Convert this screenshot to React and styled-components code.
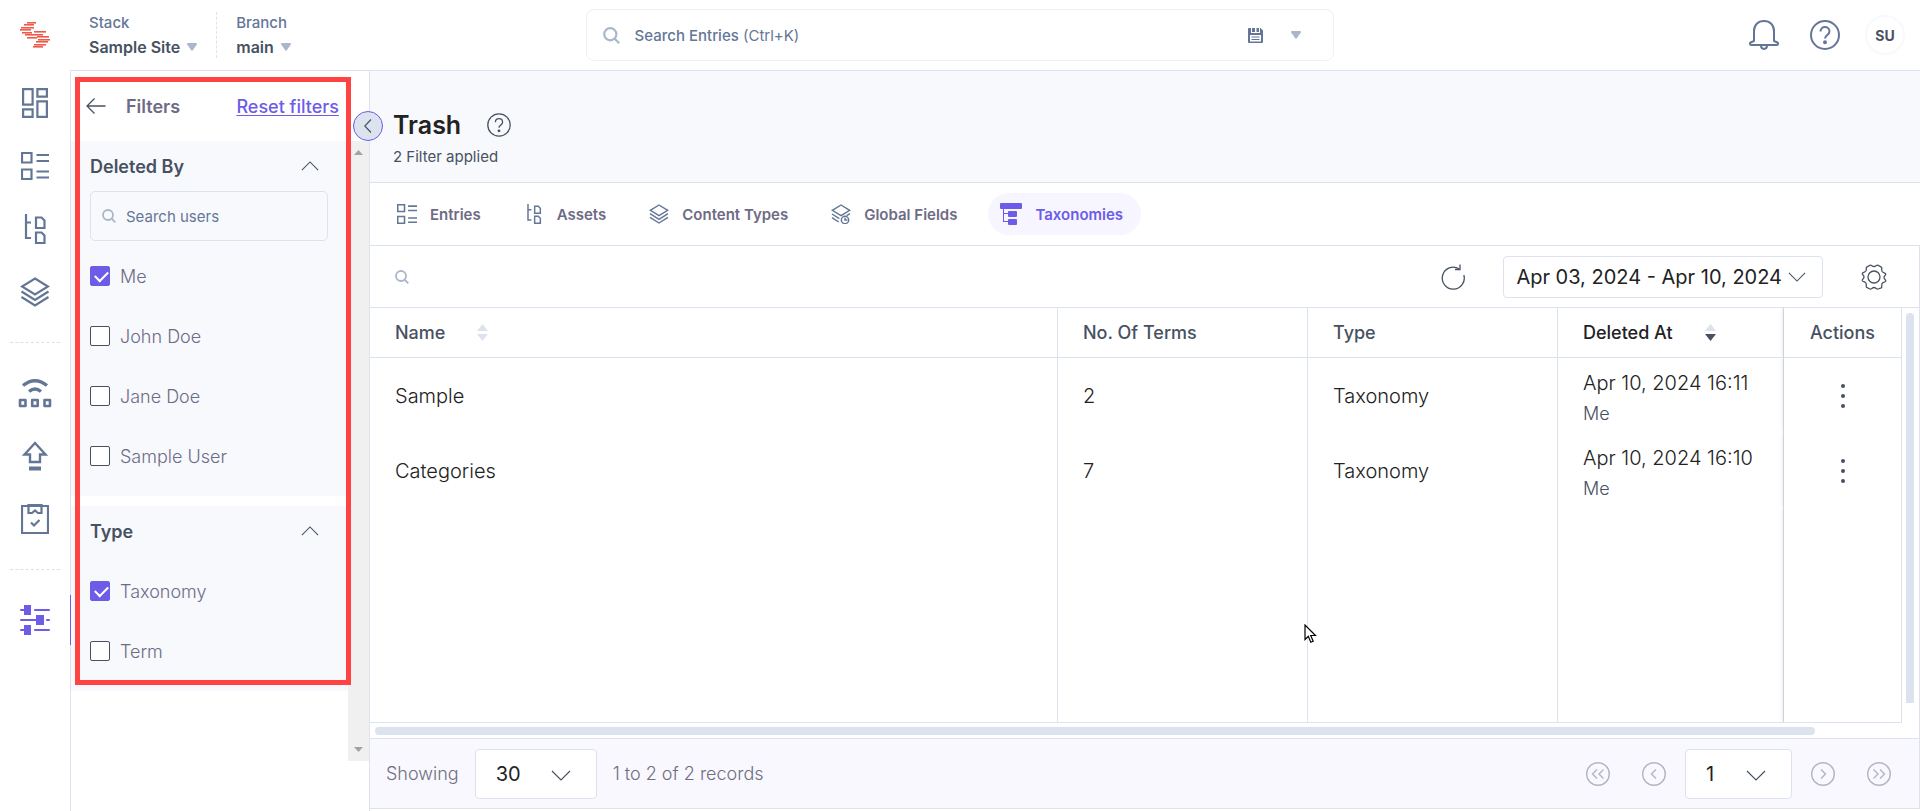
import React, { useState } from 'react';
import styled, { createGlobalStyle } from 'styled-components';

const TABS = [
    { id: 'entries', label: 'Entries' },
    { id: 'assets', label: 'Assets' },
    { id: 'content', label: 'Content Types' },
    { id: 'global', label: 'Global Fields' },
    { id: 'taxonomies', label: 'Taxonomies' },
];

const ROWS = [
    { id: 1, name: 'Sample', terms: 2, type: 'Taxonomy', date: 'Apr 10, 2024 16:11', by: 'Me' },
    { id: 2, name: 'Categories', terms: 7, type: 'Taxonomy', date: 'Apr 10, 2024 16:10', by: 'Me' },
];

function Logo() {
    const bars = [
        [7, 0, 9], [4, 2, 10], [1, 5, 13], [0, 7, 11], [2, 10, 10], [5, 12, 18],
        [14, 9, 12], [7, 15, 10], [17, 14, 12], [18, 17, 12], [16, 19, 12], [14, 22, 12], [13, 24, 10],
    ];
    return (
        <svg width="30" height="26" viewBox="0 0 30 26" fill="#ee5a4a" aria-hidden="true">
            {bars.map(([x, y, w]) => (
                <rect key={`${x}-${y}`} x={x} y={y} width={w} height="1.6" />
            ))}
        </svg>
    );
}

function EntriesIcon({ size = 28 }) {
    return (
        <svg width={size} height={size} viewBox="0 0 28 28" fill="none" stroke="currentColor" strokeWidth="2.2" aria-hidden="true">
            <path d="M1 1h9.500v9.500H1zM1 17.500h9.500V27H1zM15.500 3H28M15.500 9H28M15.500 19.500H28M15.500 25.500H28" />
        </svg>
    );
}

function AssetsIcon({ size = 30 }) {
    return (
        <svg width={size} height={size} viewBox="0 0 30 30" fill="none" stroke="currentColor" strokeWidth="2.2" aria-hidden="true">
            <path d="M6 0v24h5M6 8.500h5M16 3.500h5.500l3 3V14H16zM16 18.500h5.500l3 3V29H16z" />
        </svg>
    );
}

function LayersIcon({ size = 30, clock }) {
    return (
        <svg width={size} height={size} viewBox="0 0 30 30" fill="none" stroke="currentColor" strokeWidth="2.2" aria-hidden="true">
            <path d="M15 1.500L28 9.500 15 17.500 2 9.500z" />
            {clock ? (
                <>
                    <path d="M1.500 15l11 7M28.500 14.500l-5 3M1.500 20.500l10 6.500" />
                    <circle cx="21" cy="24" r="5.500" />
                    <path d="M21 20.500V24h3.500" />
                </>
            ) : (
                <path d="M1.500 14.500L15 23l13.500-8.500M1.500 20L15 28.500 28.500 20" />
            )}
        </svg>
    );
}

function TaxonomyIcon() {
    return (
        <svg width="22" height="22" viewBox="0 0 22 22" fill="currentColor" aria-hidden="true">
            <rect width="22" height="6" rx="1" />
            <path d="M3 5h1v5h5v1H4v7h5v1H3z" />
            <rect x="8" y="8" width="9" height="6" rx="1" />
            <rect x="8" y="16" width="9" height="6" rx="1" />
        </svg>
    );
}

function DashboardIcon() {
    return (
        <svg width="26" height="30" viewBox="0 0 26 30" fill="none" stroke="currentColor" strokeWidth="2.200" aria-hidden="true">
            <path d="M1.100 1.100h9.500v15.500H1.100zM15.400 1.100h9.500v7.500h-9.500zM1.100 21.400h9.500v7.500H1.100zM15.400 13.400h9.500v15.500h-9.500z" />
        </svg>
    );
}

function ReleaseIcon() {
    return (
        <svg width="34" height="30" viewBox="0 0 34 30" fill="none" stroke="currentColor" aria-hidden="true">
            <path d="M5 7.500Q17-2 29 7.500" strokeWidth="3.4" />
            <path d="M11 13.500q6-5 12 0" strokeWidth="3.4" />
            <path d="M2 22h5.500v6H2zM14.200 22h5.500v6h-5.500zM26.500 22H32v6h-5.500z" strokeWidth="2.600" strokeLinejoin="round" />
        </svg>
    );
}

function PublishIcon() {
    return (
        <svg width="28" height="30" viewBox="0 0 28 30" fill="none" stroke="currentColor" strokeWidth="2.400" aria-hidden="true">
            <path d="M14 2L3.500 13.500h5.500V21h10v-7.500h5.500z" />
            <path d="M8 27.500h12" strokeWidth="4" />
        </svg>
    );
}

function TasksIcon() {
    return (
        <svg width="28" height="30" viewBox="0 0 28 30" fill="none" stroke="currentColor" strokeWidth="2.2" aria-hidden="true">
            <path d="M1 2h26v27H1zM7.500 1h13v8h-3.500L14 6.500 11 9H7.500zM10 18.500l3 3 5.500-5.500" />
        </svg>
    );
}

function SlidersIcon() {
    return (
        <svg width="30" height="30" viewBox="0 0 30 30" fill="currentColor" aria-hidden="true">
            <path d="M4 0h7v10H4zM16 10h8v10h-8zM4 20h7v10H4z" />
            <path d="M1 5h4M15 5h14M1 15h17M27 15h2M1 25h4M15 25h14" stroke="currentColor" strokeWidth="2" strokeLinecap="round" />
        </svg>
    );
}

function SearchIcon({ size = 14 }) {
    return (
        <svg width={size} height={size} viewBox="0 0 14 14" fill="none" stroke="#a9b6cb" strokeWidth="1.800" aria-hidden="true">
            <circle cx="6" cy="6" r="5" />
            <path d="M9.500 9.500L13.300 13.300" />
        </svg>
    );
}

function Chevron({ dir = 'down', width = 20 }) {
    const d = {
        down: 'M1 1l9 9 9-9',
        up: 'M1 10l9-9 9 9',
    };
    return (
        <svg width={width} height={Math.round(width * 0.55)} viewBox="0 0 20 11" fill="none" stroke="#475161" strokeWidth="1.200" aria-hidden="true">
            <path d={d[dir]} />
        </svg>
    );
}

function Caret() {
    return (
        <svg width="10" height="8" viewBox="0 0 10 8" fill="#a9b6cb" aria-hidden="true">
            <path d="M1 0h8a1 1 0 0 1 .8 1.600L5.800 7.300a1 1 0 0 1-1.600 0L.2 1.600A1 1 0 0 1 1 0z" />
        </svg>
    );
}

function HelpIcon({ size, stroke }) {
    return (
        <svg width={size} height={size} viewBox="0 0 30 30" fill="none" stroke="currentColor" strokeWidth={stroke} aria-hidden="true">
            <circle cx="15" cy="15" r="14" />
            <path d="M10.500 11.500c0-6 9-6 9 0 0 3.500-4.500 3.500-4.500 7" />
            <circle cx="15" cy="22.300" r="1" fill="currentColor" />
        </svg>
    );
}

function BellIcon() {
    return (
        <svg width="30" height="30" viewBox="0 0 30 30" fill="none" stroke="currentColor" strokeWidth="2" strokeLinejoin="round" aria-hidden="true">
            <path d="M5 21V11C5 5 9 1 15 1s10 4 10 10v10l3.500 1.500c1 .800.500 2.500-1 2.500h-25c-1.500 0-2-1.700-1-2.500z" />
            <path d="M12 25.500c0 4.500 6 4.500 6 0" />
        </svg>
    );
}

function SaveIcon() {
    return (
        <svg width="15" height="15" viewBox="0 0 15 15" fill="#647696" aria-hidden="true">
            <path fillRule="evenodd" d="M1 0h2v5h9V0h.500L15 2.500V14a1 1 0 0 1-1 1H1a1 1 0 0 1-1-1V1a1 1 0 0 1 1-1zM2 7v6.500h11V7z" />
            <path d="M4 0h3v4H4zM8.500 0h2.500v4H8.500zM3.500 8.500h8v1h-8zM3.500 11h8v1h-8z" />
        </svg>
    );
}

function RefreshIcon() {
    return (
        <svg width="24" height="26" viewBox="0 0 24 26" fill="none" stroke="#475161" strokeWidth="1.300" aria-hidden="true">
            <path d="M22.800 11A11 11 0 1 1 18 4.800" />
            <path d="M19 .500v5h-5" />
        </svg>
    );
}

function GearIcon() {
    return (
        <svg width="26" height="26" viewBox="0 0 26 26" fill="none" stroke="#475161" strokeWidth="1.300" strokeLinejoin="round" aria-hidden="true">
            <path d="M9 1.200C10.500.600 11 2.500 13 2.500s2.500-1.900 4-1.300l3.300 1.900c1.200.900-.200 2.300.700 4.200 1 1.800 2.900 1.300 3.700 2.500.500 1.700-1.700 1.700-1.700 3.700s2.200 2.200 1.700 3.700c-.8 1.400-2.700.600-3.700 2.500-.900 1.700.500 3.200-.700 4.200L17 25c-1.500.500-2-1.500-4-1.500S10.500 25.500 9 25l-3.300-1.600c-1.200-1 .2-2.500-.7-4.200-1-1.900-2.900-1.100-3.700-2.500-.5-1.500 1.700-1.700 1.700-3.700S.800 11 1.300 9.300C2.100 8.100 4 8.600 5 6.800c.9-1.900-.5-2.800.7-3.700z" />
            <circle cx="13" cy="13" r="6" />
        </svg>
    );
}

function PageArrow({ double, next }) {
    return (
        <svg width="24" height="24" viewBox="0 0 24 24" fill="none" stroke="#b1b5c3" strokeWidth="1.400" transform={next ? 'rotate(180)' : undefined} aria-hidden="true">
            <circle cx="12" cy="12" r="11.300" />
            {double ? <path d="M11 7.500L6.500 12l4.500 4.500M17.500 7.500L13 12l4.500 4.500" /> : <path d="M14 7.500L9.500 12l4.500 4.500" />}
        </svg>
    );
}

function SortIcon({ active }) {
    return (
        <svg width="11" height="17" viewBox="0 0 11 17" fill="#dce2ee" aria-hidden="true">
            <path d="M5.500 0L11 7H0z" />
            <path d="M5.500 17L0 10h11z" fill={active ? '#475161' : '#dce2ee'} />
        </svg>
    );
}

const TAB_ICONS = {
    entries: <EntriesIcon size={20} />,
    assets: <AssetsIcon size={20} />,
    content: <LayersIcon size={20} />,
    global: <LayersIcon size={20} clock />,
    taxonomies: <TaxonomyIcon />,
};

function FilterGroup({ title, items, children }) {
    const [checked, setChecked] = useState([items[0]]);
    const toggle = (item) => {
        setChecked(checked.includes(item) ? checked.filter((i) => i !== item) : [...checked, item]);
    };
    return (
        <Group>
            <GroupHead type="button">
                {title}
                <Chevron dir="up" width={18} />
            </GroupHead>
            {children}
            <Options>
                {items.map((item) => (
                    <Option key={item}>
                        <Checkbox type="checkbox" checked={checked.includes(item)} onChange={() => toggle(item)} />
                        {item}
                    </Option>
                ))}
            </Options>
        </Group>
    );
}

function App() {
    const [tab, setTab] = useState('taxonomies');
    return (
        <Page>
            <GlobalStyle />
            <TopBar>
                <TopLeft>
                    <LogoLink href="#" aria-label="Home"><Logo /></LogoLink>
                    <Switcher type="button">
                        <SwitcherLabel>Stack</SwitcherLabel>
                        <SwitcherValue>Sample Site <Caret /></SwitcherValue>
                    </Switcher>
                    <Switcher type="button" $divided>
                        <SwitcherLabel>Branch</SwitcherLabel>
                        <SwitcherValue>main <Caret /></SwitcherValue>
                    </Switcher>
                </TopLeft>
                <GlobalSearch>
                    <SearchIcon size={17} />
                    <SearchText type="button"><b>Search Entries</b> (Ctrl+K)</SearchText>
                    <SearchTools>
                        <IconButton type="button" aria-label="Saved searches"><SaveIcon /></IconButton>
                        <IconButton type="button" aria-label="Search options"><Caret /></IconButton>
                    </SearchTools>
                </GlobalSearch>
                <TopRight>
                    <TopActions>
                        <IconButton type="button" aria-label="Notifications"><BellIcon /></IconButton>
                        <IconButton type="button" aria-label="Help"><HelpIcon size={30} stroke={2} /></IconButton>
                    </TopActions>
                    <Avatar type="button">SU</Avatar>
                </TopRight>
            </TopBar>
            <Body>
                <Rail>
                    <RailLink href="#" aria-label="Dashboard"><DashboardIcon /></RailLink>
                    <RailLink href="#" aria-label="Entries"><EntriesIcon /></RailLink>
                    <RailLink href="#" aria-label="Assets"><AssetsIcon /></RailLink>
                    <RailLink href="#" aria-label="Content Models"><LayersIcon /></RailLink>
                    <RailDivider />
                    <RailLink href="#" aria-label="Releases"><ReleaseIcon /></RailLink>
                    <RailLink href="#" aria-label="Publish Queue"><PublishIcon /></RailLink>
                    <RailLink href="#" aria-label="Tasks"><TasksIcon /></RailLink>
                    <RailDivider />
                    <RailLink href="#" aria-label="Settings" $active><SlidersIcon /></RailLink>
                </Rail>
                <FilterPanel>
                    <PanelHead>
                        <IconButton type="button" aria-label="Back">
                            <svg width="20" height="16" viewBox="0 0 20 16" fill="none" stroke="#475161" strokeWidth="1.300">
                                <path d="M19.500 8H1M8.500.500L1 8l7.500 7.500" />
                            </svg>
                        </IconButton>
                        <PanelTitle>Filters</PanelTitle>
                        <ResetLink href="#">Reset filters</ResetLink>
                    </PanelHead>
                    <PanelBody>
                        <Groups>
                            <FilterGroup title="Deleted By" items={['Me', 'John Doe', 'Jane Doe', 'Sample User']}>
                                <UserSearch>
                                    <SearchIcon />
                                    <SearchInput type="text" placeholder="Search users" aria-label="Search users" />
                                </UserSearch>
                            </FilterGroup>
                            <FilterGroup title="Type" items={['Taxonomy', 'Term']} />
                        </Groups>
                        <PanelScroll>
                            <svg width="9" height="5" viewBox="0 0 9 5" fill="#a3a3a3"><path d="M4.500 0L9 5H0z" /></svg>
                            <svg width="9" height="5" viewBox="0 0 9 5" fill="#a3a3a3"><path d="M4.500 5L0 0h9z" /></svg>
                        </PanelScroll>
                    </PanelBody>
                    <Highlight />
                    <Collapse type="button" aria-label="Collapse filters">
                        <svg width="8" height="14" viewBox="0 0 8 14" fill="none" stroke="#475161" strokeWidth="1.200">
                            <path d="M7 .500L.800 7 7 13.500" />
                        </svg>
                    </Collapse>
                </FilterPanel>
                <Main>
                    <PageHead>
                        <TitleRow>
                            <Title>Trash</Title>
                            <HelpIcon size={24} stroke={1.6} />
                        </TitleRow>
                        <Subtitle>2 Filter applied</Subtitle>
                    </PageHead>
                    <Tabs>
                        {TABS.map((t) => (
                            <Tab key={t.id} type="button" $active={tab === t.id} onClick={() => setTab(t.id)}>
                                {TAB_ICONS[t.id]}
                                {t.label}
                            </Tab>
                        ))}
                    </Tabs>
                    <Content>
                        <Toolbar>
                            <TableSearch>
                                <SearchIcon />
                                <SearchInput type="text" aria-label="Search trash" />
                            </TableSearch>
                            <IconButton type="button" aria-label="Refresh"><RefreshIcon /></IconButton>
                            <DateRange type="button">
                                Apr 03, 2024 - Apr 10, 2024
                                <Chevron width={18} />
                            </DateRange>
                            <IconButton type="button" aria-label="Table settings"><GearIcon /></IconButton>
                        </Toolbar>
                        <TableArea>
                            <Table>
                                <colgroup>
                                    <col />
                                    <Col $width={250} />
                                    <Col $width={250} />
                                    <Col $width={226} />
                                    <Col $width={118} />
                                </colgroup>
                                <thead>
                                    <tr>
                                        <Th><Sortable>Name <SortIcon /></Sortable></Th>
                                        <Th>No. Of Terms</Th>
                                        <Th>Type</Th>
                                        <Th $active><Sortable>Deleted At <SortIcon active /></Sortable></Th>
                                        <Th $center>Actions</Th>
                                    </tr>
                                </thead>
                                <tbody>
                                    {ROWS.map((row) => (
                                        <Row key={row.id}>
                                            <Td>{row.name}</Td>
                                            <Td>{row.terms}</Td>
                                            <Td>{row.type}</Td>
                                            <Td $stacked>{row.date}<By>{row.by}</By></Td>
                                            <Td $center>
                                                <IconButton type="button" aria-label={`Actions for ${row.name}`}>
                                                    <svg width="4" height="24" viewBox="0 0 4 24" fill="#475161">
                                                        <circle cx="2" cy="2" r="2" />
                                                        <circle cx="2" cy="12" r="2" />
                                                        <circle cx="2" cy="22" r="2" />
                                                    </svg>
                                                </IconButton>
                                            </Td>
                                        </Row>
                                    ))}
                                    <tr>
                                        <Td /><Td /><Td /><Td /><Td />
                                    </tr>
                                </tbody>
                            </Table>
                            <VTrack><VThumb /></VTrack>
                        </TableArea>
                        <HTrack><HThumb /></HTrack>
                    </Content>
                    <Footer>
                        <label htmlFor="page-size">Showing</label>
                        <SelectBox $width={122}>
                            <Select id="page-size" defaultValue="30">
                                <option>10</option>
                                <option>30</option>
                                <option>50</option>
                            </Select>
                            <Chevron />
                        </SelectBox>
                        <Records>1 to 2 of 2 records</Records>
                        <Pager>
                            <IconButton type="button" aria-label="First page"><PageArrow double /></IconButton>
                            <IconButton type="button" aria-label="Previous page"><PageArrow /></IconButton>
                        </Pager>
                        <SelectBox $width={107}>
                            <Select aria-label="Page" defaultValue="1">
                                <option>1</option>
                            </Select>
                            <Chevron />
                        </SelectBox>
                        <Pager>
                            <IconButton type="button" aria-label="Next page"><PageArrow next /></IconButton>
                            <IconButton type="button" aria-label="Last page"><PageArrow double next /></IconButton>
                        </Pager>
                    </Footer>
                </Main>
            </Body>
            <Cursor width="13" height="20" viewBox="0 0 13 20" aria-hidden="true">
                <path d="M1 1v14.500l3.300-3.200 2.500 6 2.400-1-2.500-5.800h4.800z" fill="#fff" stroke="#000" strokeWidth="1.200" />
            </Cursor>
        </Page>
    );
}

const GlobalStyle = createGlobalStyle`
    * {
        box-sizing: border-box;
    }
    body {
        margin: 0;
        color: #475161;
        font-family: Inter, "Liberation Sans", sans-serif;
        font-size: 18px;
        font-weight: 300;
    }
    button, input, select {
        margin: 0;
        padding: 0;
        border: 0;
        background: none;
        color: inherit;
        font: inherit;
    }
    svg {
        display: block;
        flex: none;
    }
`;
const line = '1px solid #dce2ee';
const Page = styled.div`
    display: flex;
    flex-direction: column;
    min-height: 100vh;
    background: #fff;
`;
const TopBar = styled.header`
    display: grid;
    grid-template-columns: 1fr 39% 1fr;
    align-items: center;
    height: 70px;
`;
const TopLeft = styled.div`
    display: flex;
    align-items: center;
`;
const LogoLink = styled.a`
    display: flex;
    justify-content: center;
    width: 70px;
`;
const Switcher = styled.button`
    display: flex;
    flex-direction: column;
    justify-content: center;
    gap: 4px;
    height: 46px;
    padding: 0 19px;
    text-align: left;
    border-left: ${(props) => (props.$divided ? '1px dashed #dce2ee' : '0')};
`;
const SwitcherLabel = styled.span`
    color: #647696;
    font-size: 15px;
    font-weight: 500;
    line-height: 20px;
`;
const SwitcherValue = styled.span`
    display: flex;
    align-items: center;
    gap: 7px;
    font-size: 16px;
    font-weight: 600;
    line-height: 20px;
`;
const GlobalSearch = styled.div`
    display: flex;
    align-items: center;
    gap: 15px;
    height: 52px;
    padding: 0 32px 0 16px;
    border: 1px solid #edf1f7;
    border-radius: 8px;
`;
const SearchText = styled.button`
    flex: 1;
    color: #647696;
    font-size: 15px;
    font-weight: 400;
    text-align: left;
    b {
        font-weight: 500;
    }
`;
const SearchTools = styled.div`
    display: flex;
    gap: 28px;
`;
const IconButton = styled.button`
    display: flex;
    align-items: center;
    justify-content: center;
    color: inherit;
`;
const TopRight = styled.div`
    display: flex;
    align-items: center;
    justify-content: flex-end;
    gap: 25px;
    padding-right: 15px;
`;
const TopActions = styled.div`
    display: flex;
    gap: 31px;
    color: #647696;
`;
const Avatar = styled.button`
    width: 40px;
    height: 40px;
    border: 2px solid #f7f9fc;
    border-radius: 50%;
    color: #475161;
    font-size: 14px;
    font-weight: 700;
`;
const Body = styled.div`
    display: flex;
    flex: 1;
`;
const Rail = styled.nav`
    display: flex;
    flex-direction: column;
    width: 71px;
    border-right: ${line};
`;
const RailLink = styled.a`
    display: flex;
    align-items: center;
    justify-content: center;
    height: 50px;
    margin: 8px -1px 5px 0;
    color: ${(props) => (props.$active ? '#6c5ce7' : '#647696')};
    border-right: 1px solid ${(props) => (props.$active ? '#6c5ce7' : 'transparent')};
`;
const RailDivider = styled.hr`
    width: 50px;
    margin: 20px 10px 17px;
    border: 0;
    border-top: 1px dashed #dcdfe6;
`;
const FilterPanel = styled.aside`
    position: relative;
    display: flex;
    flex-direction: column;
    width: 299px;
    border-top: ${line};
    border-right: ${line};
`;
const PanelHead = styled.div`
    display: flex;
    align-items: center;
    height: 70px;
    padding: 0 30px 0 15px;
`;
const PanelTitle = styled.h2`
    flex: 1;
    margin: 0 0 0 20px;
    color: #6e6b86;
    font-size: 18px;
    font-weight: 600;
`;
const ResetLink = styled.a`
    color: #6c5ce7;
    font-weight: 500;
    text-underline-offset: 2px;
`;
const PanelBody = styled.div`
    display: flex;
    flex: 1;
    margin-bottom: 50px;
`;
const Groups = styled.div`
    display: flex;
    flex: 1;
    flex-direction: column;
    gap: 10px;
    min-width: 0;
`;
const Group = styled.section`
    padding: 0 20px 10px 19px;
    background: #f7f9fd;
`;
const GroupHead = styled.button`
    display: flex;
    align-items: center;
    justify-content: space-between;
    width: 100%;
    height: 50px;
    padding-right: 9px;
    font-weight: 600;
`;
const UserSearch = styled.div`
    display: flex;
    align-items: center;
    gap: 10px;
    height: 50px;
    padding: 0 11px;
    border: ${line};
    border-radius: 5px;
`;
const SearchInput = styled.input`
    flex: 1;
    min-width: 0;
    font-size: 15px;
    font-weight: 400;
    outline: none;
    &::placeholder {
        color: #647696;
        opacity: 1;
    }
`;
const Options = styled.div`
    margin-top: 5px;
`;
const Option = styled.label`
    display: flex;
    align-items: center;
    gap: 10px;
    height: 60px;
    color: #6e6b86;
`;
const Checkbox = styled.input`
    appearance: none;
    position: relative;
    width: 20px;
    height: 20px;
    border: 1px solid #475161;
    border-radius: 2px;
    background: #fff;
    &:checked {
        border-color: #6c5ce7;
        background: #6c5ce7;
    }
    &:checked::after {
        content: "";
        position: absolute;
        top: 4px;
        left: 4px;
        width: 11px;
        height: 6px;
        border: solid #fff;
        border-width: 0 0 2px 2px;
        transform: rotate(-45deg);
    }
`;
const PanelScroll = styled.div`
    display: flex;
    flex-direction: column;
    align-items: center;
    justify-content: space-between;
    width: 21px;
    padding: 9px 0;
    background: #f0f0f0;
`;
const Highlight = styled.div`
    position: absolute;
    top: 6px;
    left: 4px;
    width: 276px;
    height: 608px;
    border: 5px solid #ff4343;
    pointer-events: none;
`;
const Collapse = styled.button`
    position: absolute;
    top: 40px;
    right: -14px;
    display: flex;
    align-items: center;
    justify-content: center;
    width: 30px;
    height: 30px;
    border: 1px solid #6c5ce7;
    border-radius: 50%;
    background: #dce2ee;
`;
const Main = styled.main`
    display: flex;
    flex: 1;
    flex-direction: column;
    min-width: 0;
    padding-bottom: 2px;
    border-top: ${line};
`;
const PageHead = styled.div`
    height: 112px;
    padding: 36px 23px 0;
    border-bottom: ${line};
    background: #f7f9fd;
`;
const TitleRow = styled.div`
    display: flex;
    align-items: center;
    gap: 26px;
`;
const Title = styled.h1`
    margin: 0;
    color: #222;
    font-size: 25px;
    font-weight: 600;
    line-height: 36px;
`;
const Subtitle = styled.p`
    margin: 4px 0 0;
    font-size: 15px;
    font-weight: 400;
    line-height: 20px;
`;
const Tabs = styled.div`
    display: flex;
    align-items: center;
    gap: 13px;
    height: 62px;
    padding: 0 15px;
`;
const Tab = styled.button`
    display: flex;
    align-items: center;
    gap: 13px;
    height: 42px;
    padding: 0 18px 0 12px;
    border-radius: 21px;
    background: ${(props) => (props.$active ? '#f7f5ff' : 'transparent')};
    color: ${(props) => (props.$active ? '#6c5ce7' : '#6e6b86')};
    font-size: 15px;
    font-weight: 600;
    svg {
        color: ${(props) => (props.$active ? '#6c5ce7' : '#647696')};
    }
`;
const Content = styled.div`
    display: flex;
    flex: 1;
    flex-direction: column;
    border-top: ${line};
    border-right: ${line};
`;
const Toolbar = styled.div`
    display: flex;
    align-items: center;
    height: 61px;
    padding: 0 32px 0 25px;
    gap: 38px;
`;
const TableSearch = styled.div`
    display: flex;
    flex: 1;
    align-items: center;
    gap: 10px;
`;
const DateRange = styled.button`
    display: flex;
    align-items: center;
    gap: 6px;
    height: 42px;
    padding: 0 16px 0 12px;
    border: ${line};
    border-radius: 4px;
    color: #222;
    font-size: 20px;
    font-weight: 400;
`;
const TableArea = styled.div`
    display: flex;
    flex: 1;
`;
const Table = styled.table`
    flex: 1;
    height: 416px;
    table-layout: fixed;
    border-collapse: separate;
    border-spacing: 0;
    border-top: ${line};
    border-bottom: ${line};
`;
const Col = styled.col`
    width: ${(props) => props.$width}px;
`;
const Th = styled.th`
    height: 50px;
    padding: 0 ${(props) => (props.$center ? 0 : 25)}px;
    border-right: ${line};
    border-bottom: ${line};
    color: ${(props) => (props.$active ? '#222' : '#475161')};
    font-size: 18px;
    font-weight: 500;
    text-align: ${(props) => (props.$center ? 'center' : 'left')};
    &:last-child {
        box-shadow: -1px 0 4px rgba(0, 0, 0, 0.12);
        clip-path: inset(0 0 0 -6px);
    }
`;
const Sortable = styled.span`
    display: flex;
    align-items: center;
    gap: 32px;
`;
const Row = styled.tr`
    height: 75px;
`;
const Td = styled.td`
    padding: ${(props) => (props.$stacked ? 6 : 0)}px ${(props) => (props.$center ? 0 : 25)}px 0;
    border-right: ${line};
    color: #222;
    font-size: 20px;
    line-height: 30px;
    &:last-child {
        box-shadow: -1px 0 4px rgba(0, 0, 0, 0.12);
        clip-path: inset(0 0 0 -6px);
    }
    button {
        margin: 0 auto;
    }
`;
const By = styled.div`
    color: #475161;
    font-size: 18px;
    line-height: 32px;
`;
const VTrack = styled.div`
    width: 17px;
    padding: 5px 4px 20px;
    border-top: ${line};
`;
const VThumb = styled.div`
    width: 8px;
    height: 100%;
    border-radius: 4px 4px 0 0;
    background: #dce2ee;
`;
const HTrack = styled.div`
    height: 15px;
    padding: 4px 104px 0 5px;
`;
const HThumb = styled.div`
    height: 8px;
    border-radius: 4px;
    background: #dce2ee;
`;
const Footer = styled.footer`
    display: flex;
    align-items: center;
    gap: 16px;
    height: 71px;
    padding: 0 25px 0 16px;
    border: ${line};
    border-left: 0;
    background: #f8f8fe;
    color: #6e6e80;
`;
const SelectBox = styled.div`
    position: relative;
    width: ${(props) => props.$width}px;
    height: 50px;
    border: ${line};
    border-radius: 4px;
    background: #fff;
    svg {
        position: absolute;
        top: 20px;
        right: 25px;
        pointer-events: none;
    }
`;
const Select = styled.select`
    appearance: none;
    width: 100%;
    height: 100%;
    padding: 0 20px;
    color: #222;
    font-size: 20px;
    font-weight: 400;
`;
const Records = styled.span`
    flex: 1;
`;
const Pager = styled.div`
    display: flex;
    gap: 32px;
    margin: 0 3px;
`;
const Cursor = styled.svg`
    position: absolute;
    top: 624px;
    left: 1304px;
`;
export default App;
